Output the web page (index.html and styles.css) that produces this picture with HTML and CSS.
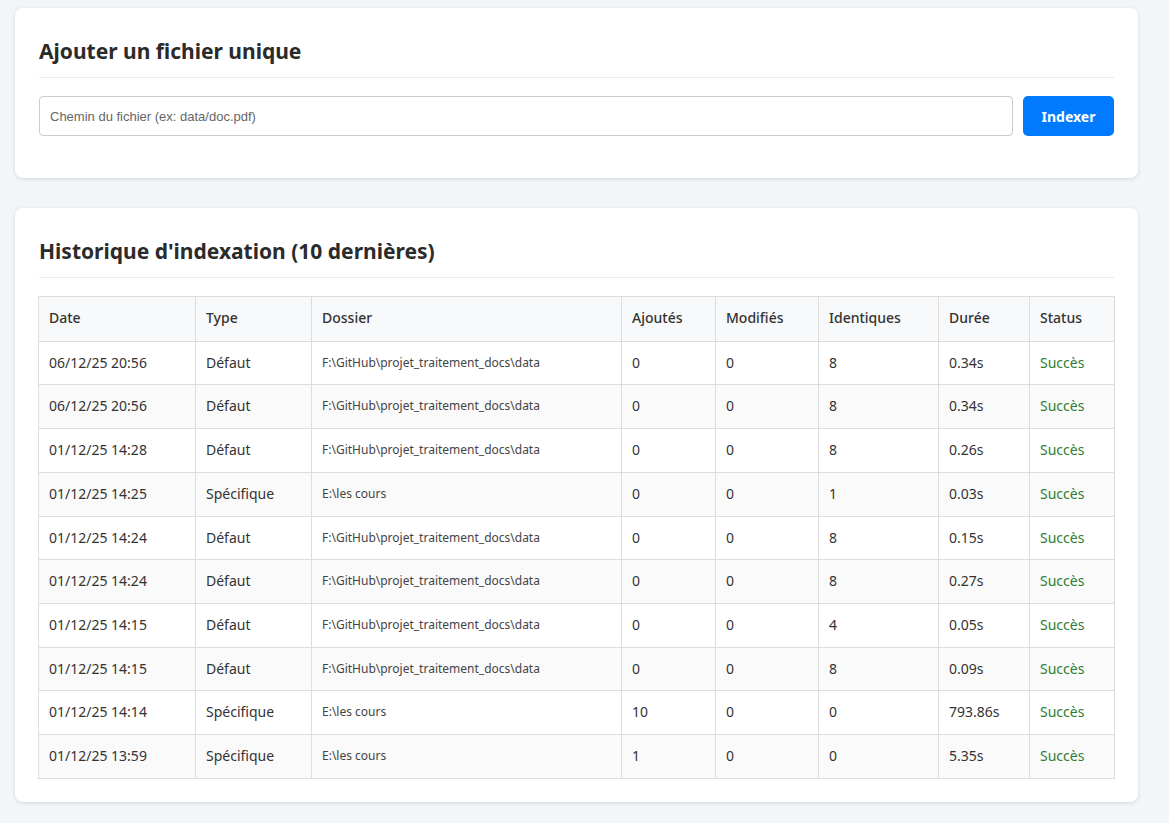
FILE: index.html
```html
<!DOCTYPE html>
<html>
<head>
    <meta charset="utf-8">
    <link rel="stylesheet" href="styles.css">
</head>
<body>
    <div class="page">
        <div class="card">
            <h2>Ajouter un fichier unique</h2>
            <div class="add-row">
                <input type="text" class="path-input" placeholder="Chemin du fichier (ex: data/doc.pdf)">
                <button class="btn">Indexer</button>
            </div>
        </div>

        <div class="card">
            <h2>Historique d'indexation (10 dernières)</h2>
            <table class="history">
                <colgroup>
                    <col style="width:157px"><col style="width:116px"><col style="width:310px"><col style="width:94px">
                    <col style="width:103px"><col style="width:120px"><col style="width:91px"><col style="width:85px">
                </colgroup>
                <thead>
                    <tr>
                        <th>Date</th><th>Type</th><th>Dossier</th><th>Ajoutés</th>
                        <th>Modifiés</th><th>Identiques</th><th>Durée</th><th>Status</th>
                    </tr>
                </thead>
                <tbody>
                    <tr><td>06/12/25 20:56</td><td>Défaut</td><td class="path">F:\GitHub\projet_traitement_docs\data</td><td>0</td><td>0</td><td>8</td><td>0.34s</td><td class="ok">Succès</td></tr>
                    <tr><td>06/12/25 20:56</td><td>Défaut</td><td class="path">F:\GitHub\projet_traitement_docs\data</td><td>0</td><td>0</td><td>8</td><td>0.34s</td><td class="ok">Succès</td></tr>
                    <tr><td>01/12/25 14:28</td><td>Défaut</td><td class="path">F:\GitHub\projet_traitement_docs\data</td><td>0</td><td>0</td><td>8</td><td>0.26s</td><td class="ok">Succès</td></tr>
                    <tr><td>01/12/25 14:25</td><td>Spécifique</td><td class="path">E:\les cours</td><td>0</td><td>0</td><td>1</td><td>0.03s</td><td class="ok">Succès</td></tr>
                    <tr><td>01/12/25 14:24</td><td>Défaut</td><td class="path">F:\GitHub\projet_traitement_docs\data</td><td>0</td><td>0</td><td>8</td><td>0.15s</td><td class="ok">Succès</td></tr>
                    <tr><td>01/12/25 14:24</td><td>Défaut</td><td class="path">F:\GitHub\projet_traitement_docs\data</td><td>0</td><td>0</td><td>8</td><td>0.27s</td><td class="ok">Succès</td></tr>
                    <tr><td>01/12/25 14:15</td><td>Défaut</td><td class="path">F:\GitHub\projet_traitement_docs\data</td><td>0</td><td>0</td><td>4</td><td>0.05s</td><td class="ok">Succès</td></tr>
                    <tr><td>01/12/25 14:15</td><td>Défaut</td><td class="path">F:\GitHub\projet_traitement_docs\data</td><td>0</td><td>0</td><td>8</td><td>0.09s</td><td class="ok">Succès</td></tr>
                    <tr><td>01/12/25 14:14</td><td>Spécifique</td><td class="path">E:\les cours</td><td>10</td><td>0</td><td>0</td><td>793.86s</td><td class="ok">Succès</td></tr>
                    <tr><td>01/12/25 13:59</td><td>Spécifique</td><td class="path">E:\les cours</td><td>1</td><td>0</td><td>0</td><td>5.35s</td><td class="ok">Succès</td></tr>
                </tbody>
            </table>
        </div>
    </div>
</body>
</html>
```

FILE: styles.css
```css
body {
    margin: 0;
    background-color: #f3f6f9;
    font-family: "Noto Sans", "Open Sans", sans-serif;
    color: #333;
}
.page {
    padding: 8px 31px 20px 15px;
    display: flex;
    flex-direction: column;
    gap: 30px;
}
.card {
    background-color: #fff;
    border-radius: 8px;
    padding: 24px 24px 23px 23px;
    box-shadow: 0 1px 4px rgba(0,0,0,0.12);
}
h2 {
    margin: 0 0 18px 1px;
    padding: 5px 0 12px 0;
    font-size: 21px;
    font-weight: bold;
    color: #2b2b2b;
    border-bottom: 1px solid #eaeaea;
}
.add-row {
    display: flex;
    gap: 10px;
    margin-bottom: 19px;
}
.path-input {
    flex: 1;
    height: 40px;
    box-sizing: border-box;
    margin-left: 1px;
    padding: 8px 10px;
    border: 1px solid #ccc;
    border-radius: 4px;
    font-family: "Liberation Sans", Arial, sans-serif;
    font-size: 13px;
}
.path-input::placeholder {
    color: #666;
}
.btn {
    width: 91px;
    height: 40px;
    background-color: #007bff;
    color: #fff;
    border: none;
    border-radius: 5px;
    font-family: "Noto Sans", sans-serif;
    font-size: 14px;
    font-weight: bold;
}
.history {
    width: calc(100% + 1px);
    border-collapse: collapse;
    table-layout: fixed;
    font-size: 14px;
}
.history th, .history td {
    border: 1px solid #ddd;
    padding: 10px 10px;
    text-align: left;
    line-height: 22.7px;
    color: #333;
}
.history th {
    background-color: #f8f9fa;
    font-weight: 500;
    padding: 10px 10px 11px 10px;
}
.history tbody tr:nth-child(even) {
    background-color: #fafafa;
}
.history td.path {
    font-size: 12px;
    color: #444;
}
.history td.ok {
    color: #2e7d32;
}
```
